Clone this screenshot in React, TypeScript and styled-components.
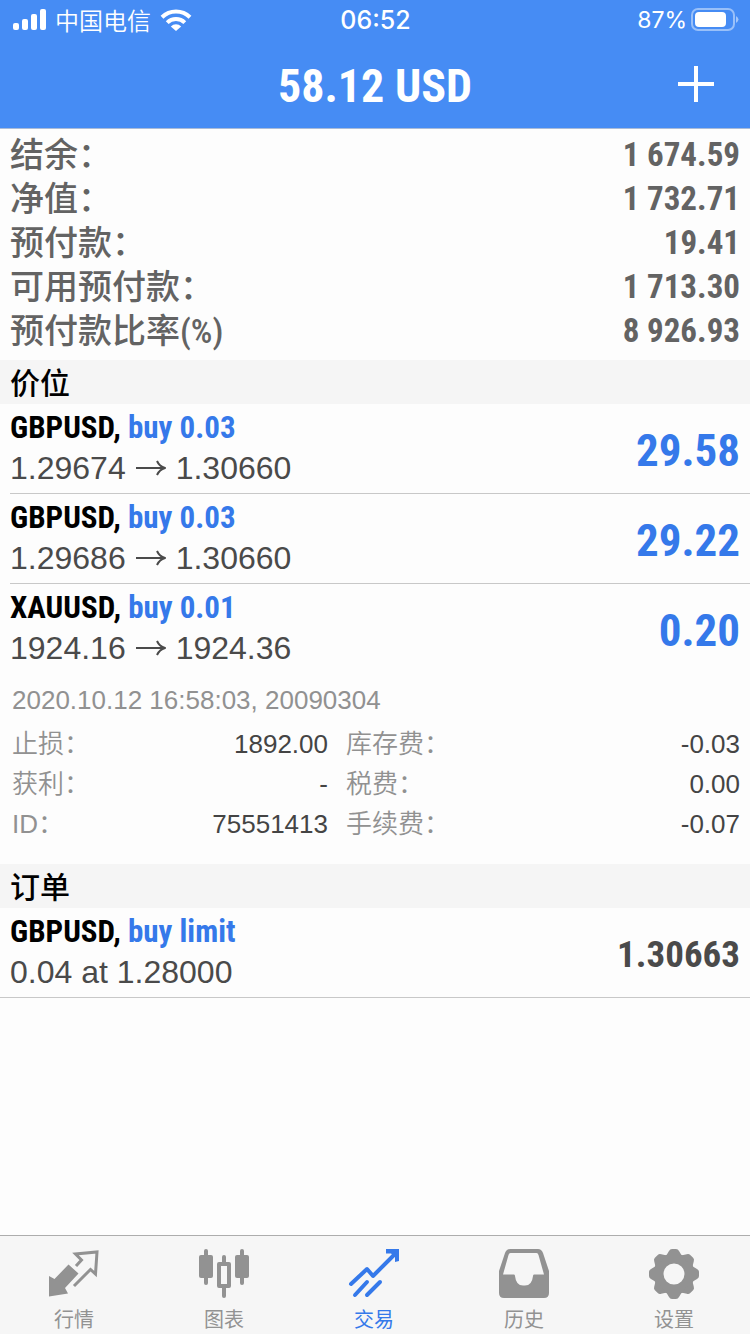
import React from 'react';
import styled, { createGlobalStyle } from 'styled-components';

const sans = '"Liberation Sans", "Noto Sans CJK SC", sans-serif';
const narrow = '"Roboto Condensed", "Noto Sans CJK SC", sans-serif';
const cjk = '"Noto Sans CJK SC", sans-serif';
const blue = '#3579ea';

const GlobalStyle = createGlobalStyle`
  * { box-sizing: border-box; }
  body { margin: 0; background: #fdfdfd; font-family: ${sans}; }
  h1, h2, p, dl, dt, dd, ul { margin: 0; padding: 0; }
  svg { display: block; }
`;

const Screen = styled.div`
  display: flex;
  flex-direction: column;
  min-height: 100vh;
`;

const Header = styled.header`
  background: #468cf4;
  color: #fff;
  border-bottom: 1px solid #a9bbd8;
`;

const StatusBar = styled.div`
  display: grid;
  grid-template-columns: 1fr auto 1fr;
  align-items: center;
  height: 40px;
  padding: 0 11px 0 12px;
  font-family: "Inter", ${cjk};
  font-size: 23px;
`;

const StatusGroup = styled.div<{ $end?: boolean }>`
  display: flex;
  align-items: center;
  gap: ${(p) => (p.$end ? 4 : 9)}px;
  justify-content: ${(p) => (p.$end ? 'flex-end' : 'flex-start')};
`;

const Carrier = styled.span`
  font-family: ${cjk};
  font-size: 24px;
  font-weight: 350;
  line-height: 36px;
`;

const Clock = styled.time`
  font-weight: 500;
  font-size: 25px;
`;

const TitleBar = styled.div`
  display: grid;
  grid-template-columns: 1fr auto 1fr;
  align-items: center;
  height: 88px;
  padding: 0 26px;
`;

const Title = styled.h1`
  grid-column: 2;
  font-family: ${narrow};
  font-size: 46px;
  line-height: 84px;
  padding-top: 4px;
  font-weight: 700;
`;

const AddButton = styled.button`
  justify-self: end;
  border: 0;
  padding: 8px 10px;
  background: none;
  color: inherit;
`;

const Main = styled.main`
  flex: 1;
`;

const Summary = styled.dl`
  padding: 4px 10px 7px;
  color: #636363;
`;

const SummaryRow = styled.div`
  display: flex;
  justify-content: space-between;
  height: 44px;
  line-height: 44px;
`;

const SummaryLabel = styled.dt`
  font-family: ${narrow};
  font-size: 34px;
  font-weight: 500;
`;

const SummaryValue = styled.dd`
  font-family: ${narrow};
  font-size: 33px;
  line-height: 43px;
  font-weight: 700;
`;

const SectionTitle = styled.h2`
  height: 44px;
  padding: 0 10px;
  background: #f5f5f5;
  color: #000;
  font-family: ${cjk};
  font-size: 30px;
  line-height: 43px;
  font-weight: 500;
`;

const List = styled.ul`
  list-style: none;
`;

const Item = styled.li<{ $line?: 'inset' | 'full' }>`
  margin-left: ${(p) => (p.$line === 'full' ? 0 : 10)}px;
  padding-left: ${(p) => (p.$line === 'full' ? 10 : 0)}px;
  padding-right: 10px;
  border-bottom: ${(p) => (p.$line ? '1px solid #c8c8c8' : '0')};
`;

const ItemHead = styled.div`
  display: flex;
  justify-content: space-between;
  height: 89px;
  padding-top: 4px;
`;

const Pair = styled.p`
  font-family: ${narrow};
  font-size: 31px;
  line-height: 40px;
  font-weight: 700;
  color: #000;
`;

const Side = styled.span`
  color: ${blue};
`;

const Quote = styled.p`
  display: flex;
  align-items: center;
  gap: 10px;
  font-size: 32px;
  line-height: 40px;
  color: #4a4a4a;
`;

const Amount = styled.strong<{ $dark?: boolean }>`
  font-family: ${narrow};
  font-size: ${(p) => (p.$dark ? 37 : 45)}px;
  line-height: 85px;
  font-weight: 700;
  color: ${(p) => (p.$dark ? '#4a4a4a' : blue)};
`;

const Meta = styled.p`
  padding: 7px 2px 4px;
  font-size: 26px;
  line-height: 40px;
  color: #919191;
`;

const Details = styled.dl`
  display: grid;
  grid-template-columns: 316fr 394fr;
  column-gap: 18px;
  padding: 0 0 20px 2px;
  font-size: 26px;
  line-height: 40px;
`;

const Detail = styled.div`
  display: flex;
  justify-content: space-between;
  height: 40px;
`;

const DetailLabel = styled.dt`
  color: #919191;
  font-weight: 350;
`;

const DetailValue = styled.dd`
  color: #444;
`;

const TabBar = styled.nav`
  position: sticky;
  bottom: 0;
  display: grid;
  grid-template-columns: repeat(5, 1fr);
  height: 99px;
  border-top: 1px solid #adadad;
  background: #f6f6f6;
`;

const Tab = styled.a<{ $active?: boolean }>`
  display: flex;
  flex-direction: column;
  align-items: center;
  gap: 4px;
  padding: 12px 2px 0 0;
  font-family: ${cjk};
  font-size: 20px;
  line-height: 30px;
  text-decoration: none;
  color: ${(p) => (p.$active ? blue : '#929292')};
`;

const Signal = () => (
  <svg width="34" height="22" viewBox="0 0 34 22" fill="#fff" aria-hidden="true">
    <rect x="1" y="14" width="6" height="7" rx="2" />
    <rect x="10" y="10" width="6" height="11" rx="2" />
    <rect x="19" y="5" width="6" height="16" rx="2" />
    <rect x="28" y="0" width="6" height="21" rx="2" />
  </svg>
);

const Wifi = () => (
  <svg width="32" height="22" viewBox="0 0 32 22" aria-hidden="true">
    <path d="M2 8.2a20 20 0 0 1 28 0M7.2 13.6a12.6 12.6 0 0 1 17.6 0" fill="none" stroke="#fff" strokeWidth="4" />
    <path d="M16 22l-5.2-4.6a7.6 7.6 0 0 1 10.4 0z" fill="#fff" />
  </svg>
);

const Battery = () => (
  <svg width="48" height="24" viewBox="0 0 48 24" aria-hidden="true">
    <rect x="1" y="1" width="42" height="21" rx="6" fill="none" stroke="#fff" strokeOpacity=".45" strokeWidth="2" />
    <rect x="4" y="4" width="31" height="15" rx="4" fill="#fff" />
    <path d="M45 8q5 3.500 0 7z" fill="#fff" fillOpacity=".5" />
  </svg>
);

const Plus = () => (
  <svg width="36" height="36" viewBox="0 0 36 36" aria-hidden="true">
    <path d="M18 0v36M0 18h36" stroke="#fff" strokeWidth="4" />
  </svg>
);

const Arrow = () => (
  <svg width="30" height="16" viewBox="0 0 30 16" aria-hidden="true">
    <path d="M0 8h28M21 1q2.500 5.500 8 7q-5.500 1.500-8 7" fill="none" stroke="currentColor" strokeWidth="2" strokeLinejoin="round" />
  </svg>
);

const iconProps = { width: 52, height: 52, viewBox: '0 0 52 52', 'aria-hidden': true };

/* Filled arrow pointing down-left, outlined arrow pointing up-right. */
const QuotesIcon = () => (
  <svg {...iconProps}>
    <path d="M20.500 16.500L30.500 25.500L17 40L20 45.500L1 48.500V28L6.500 31z" fill="currentColor" />
    <path d="M28 18l5.500-6L27.500 6L49 4L47.500 26L42.500 21.500L26 38" fill="none" stroke="currentColor" strokeWidth="3" />
  </svg>
);

const ChartIcon = () => (
  <svg {...iconProps}>
    <g fill="currentColor">
      <rect x="1" y="7" width="14" height="23" rx="2" />
      <rect x="6" y="1" width="4" height="36" rx="2" />
      <rect x="37" y="7" width="14" height="23" rx="2" />
      <rect x="42" y="1" width="4" height="36" rx="2" />
      <rect x="24" y="7" width="4" height="9" rx="2" />
      <rect x="24" y="38" width="4" height="12" rx="2" />
    </g>
    <rect x="21" y="16" width="10" height="22" fill="none" stroke="currentColor" strokeWidth="4" strokeLinejoin="round" />
  </svg>
);

const TradeIcon = () => (
  <svg {...iconProps}>
    <g fill="none" stroke="currentColor" strokeWidth="4" strokeLinecap="round">
      <path d="M3 36L19 21l6 7L47 6" strokeLinejoin="round" />
      <path d="M7 47l12-13M19 47l13-13" />
    </g>
    <path d="M38 1h13v12l-4 1V9l-4-3.500h-5z" fill="currentColor" />
  </svg>
);

const HistoryIcon = () => (
  <svg {...iconProps}>
    <path
      fill="currentColor"
      fillRule="evenodd"
      d="M12 1H40Q43.500 1 45 5L51 23V45Q51 50 46 50H6Q1 50 1 45V23L7 5Q8.500 1 12 1zM12.500 5Q11 5 10.500 7L5 26.500H16Q17 26.500 17 28Q18 37.500 25 37.500H27Q34 37.500 35 28Q35 26.500 36 26.500H46L40.500 7Q40 5 38.500 5z"
    />
  </svg>
);

const teeth = [0, 45, 90, 135, 180, 225, 270, 315];

const SettingsIcon = () => (
  <svg {...iconProps}>
    <circle cx="26" cy="26" r="15.500" fill="none" stroke="currentColor" strokeWidth="10" />
    <g fill="currentColor">
      {teeth.map((angle) => (
        <path key={angle} d="M18 8L21 3Q22 1 24 1H28Q30 1 31 3L34 8z" transform={`rotate(${angle} 26 26)`} />
      ))}
    </g>
  </svg>
);

const summary = [
  ['结余：', '1 674.59'],
  ['净值：', '1 732.71'],
  ['预付款：', '19.41'],
  ['可用预付款：', '1 713.30'],
  ['预付款比率(%)', '8 926.93'],
];

const details = [
  ['止损：', '1892.00'],
  ['库存费：', '-0.03'],
  ['获利：', '-'],
  ['税费：', '0.00'],
  ['ID：', '75551413'],
  ['手续费：', '-0.07'],
];

const positions = [
  { pair: 'GBPUSD', side: 'buy 0.03', open: '1.29674', now: '1.30660', profit: '29.58' },
  { pair: 'GBPUSD', side: 'buy 0.03', open: '1.29686', now: '1.30660', profit: '29.22' },
  { pair: 'XAUUSD', side: 'buy 0.01', open: '1924.16', now: '1924.36', profit: '0.20', expanded: true },
];

const tabs = [
  { label: '行情', Icon: QuotesIcon },
  { label: '图表', Icon: ChartIcon },
  { label: '交易', Icon: TradeIcon, active: true },
  { label: '历史', Icon: HistoryIcon },
  { label: '设置', Icon: SettingsIcon },
];

export default function App() {
  return (
    <Screen>
      <GlobalStyle />
      <Header>
        <StatusBar>
          <StatusGroup>
            <Signal />
            <Carrier>中国电信</Carrier>
            <Wifi />
          </StatusGroup>
          <Clock>06:52</Clock>
          <StatusGroup $end>
            <span>87%</span>
            <Battery />
          </StatusGroup>
        </StatusBar>
        <TitleBar>
          <Title>58.12 USD</Title>
          <AddButton type="button" aria-label="新订单">
            <Plus />
          </AddButton>
        </TitleBar>
      </Header>
      <Main>
        <Summary>
          {summary.map(([label, value]) => (
            <SummaryRow key={label}>
              <SummaryLabel>{label}</SummaryLabel>
              <SummaryValue>{value}</SummaryValue>
            </SummaryRow>
          ))}
        </Summary>
        <SectionTitle>价位</SectionTitle>
        <List>
          {positions.map((p) => (
            <Item key={p.open} $line={p.expanded ? undefined : 'inset'}>
              <ItemHead>
                <div>
                  <Pair>
                    {p.pair}, <Side>{p.side}</Side>
                  </Pair>
                  <Quote>
                    {p.open}
                    <Arrow />
                    {p.now}
                  </Quote>
                </div>
                <Amount>{p.profit}</Amount>
              </ItemHead>
              {p.expanded && (
                <>
                  <Meta>2020.10.12 16:58:03, 20090304</Meta>
                  <Details>
                    {details.map(([label, value]) => (
                      <Detail key={label}>
                        <DetailLabel>{label}</DetailLabel>
                        <DetailValue>{value}</DetailValue>
                      </Detail>
                    ))}
                  </Details>
                </>
              )}
            </Item>
          ))}
        </List>
        <SectionTitle>订单</SectionTitle>
        <List>
          <Item $line="full">
            <ItemHead>
              <div>
                <Pair>
                  GBPUSD, <Side>buy limit</Side>
                </Pair>
                <Quote>0.04 at 1.28000</Quote>
              </div>
              <Amount $dark>1.30663</Amount>
            </ItemHead>
          </Item>
        </List>
      </Main>
      <TabBar>
        {tabs.map(({ label, Icon, active }) => (
          <Tab key={label} href="#" $active={active} aria-current={active ? 'page' : undefined}>
            <Icon />
            {label}
          </Tab>
        ))}
      </TabBar>
    </Screen>
  );
}
